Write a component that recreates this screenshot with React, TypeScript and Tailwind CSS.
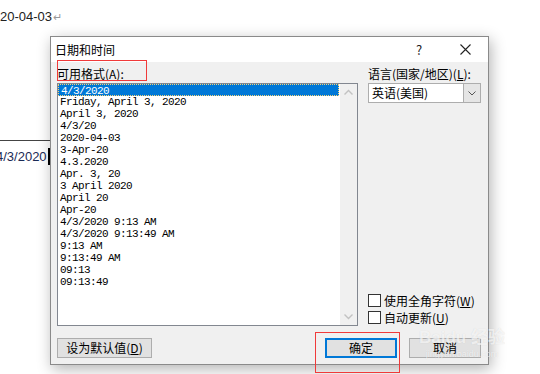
const formats = [
  '4/3/2020',
  'Friday, April 3, 2020',
  'April 3, 2020',
  '4/3/20',
  '2020-04-03',
  '3-Apr-20',
  '4.3.2020',
  'Apr. 3, 20',
  '3 April 2020',
  'April 20',
  'Apr-20',
  '4/3/2020 9:13 AM',
  '4/3/2020 9:13:49 AM',
  '9:13 AM',
  '9:13:49 AM',
  '09:13',
  '09:13:49',
]

const ui = "font-['Microsoft_YaHei','Noto_Sans_CJK_SC',sans-serif]"
const mono = "font-['Liberation_Mono','Noto_Sans_CJK_SC',monospace]"

function Chevron({ up }: { up?: boolean }) {
  return (
    <svg width="9" height="6" viewBox="0 0 9 6">
      <path
        d={up ? 'M0.5 5.5 L4.5 1.5 L8.5 5.5' : 'M0.5 0.5 L4.5 4.5 L8.5 0.5'}
        fill="none"
        stroke="#c2c2c2"
        strokeWidth="1.4"
      />
    </svg>
  )
}

function CheckRow({ label, k }: { label: string; k: string }) {
  return (
    <div className="flex h-[17px] items-center">
      <span className="h-[13px] w-[13px] shrink-0 border border-[#333] bg-white" />
      <span className="ml-[3px] text-[12px] leading-none text-black">
        {label}(<u>{k}</u>)
      </span>
    </div>
  )
}

export default function App() {
  return (
    <div className={`relative h-[374px] w-[540px] overflow-hidden bg-white ${ui}`}>
      {/* document behind the dialog */}
      <div className="flex flex-col">
        <div className="mt-[9px] flex h-[16px] items-center text-[13px] font-['Liberation_Sans',sans-serif] text-[#222]">
          20-04-03<span className="ml-[1px] text-[11px] text-[#999]">↵</span>
        </div>
        <div className="mt-[115px] h-px w-[50px] bg-[#444]" />
        <div className="mt-[7px] flex h-[17px] items-center">
          <span className="-ml-[4px] text-[13px] font-['Liberation_Sans',sans-serif] text-[#1a2a55]">4/3/2020</span>
          <span className="ml-[1px] h-[17px] w-[2px] bg-black" />
        </div>
      </div>

      {/* dialog window */}
      <div className="absolute left-[50px] top-[36px] flex h-[329px] w-[439px] flex-col border border-[#8a8a8a] bg-[#f0f0f0] shadow-[2px_4px_14px_rgba(0,0,0,0.3)]">
        <div className="flex h-[25px] items-center bg-white">
          <span className="pl-[4px] text-[12px] text-black">日期和时间</span>
          <span className="ml-auto flex h-full w-[46px] items-center justify-center text-[13px] text-[#222]">?</span>
          <span className="flex h-full w-[46px] items-center justify-center">
            <svg width="11" height="11" viewBox="0 0 11 11">
              <path d="M0.5 0.5 L10.5 10.5 M10.5 0.5 L0.5 10.5" stroke="#222" strokeWidth="1.1" />
            </svg>
          </span>
        </div>

        <div className="flex flex-1 flex-col px-[6px] pb-[5px] pt-[2px]">
          <div className="flex">
            <div className="flex w-[301px] flex-col">
              <div className="h-[19px] text-[12px] leading-[19px] text-black">
                可用格式(<u>A</u>):
              </div>
              <div className="flex h-[243px] border border-[#828790] bg-white">
                <div className={`flex-1 ${mono}`}>
                  {formats.map((f, i) => (
                    <div
                      key={f}
                      className={`h-[12px] whitespace-pre pl-[2px] text-[11px] leading-[12px] tracking-[-0.6px] ${
                        i === 0
                          ? 'mr-[1px] border border-dotted border-[#f5d37a] bg-[#0078d7] pl-[1px] leading-[10px] text-white'
                          : 'text-black'
                      }`}
                    >
                      {f}
                    </div>
                  ))}
                </div>
                <div className="flex w-[17px] flex-col items-center justify-between bg-[#f0f0f0] py-[5px]">
                  <Chevron up />
                  <Chevron />
                </div>
              </div>
            </div>

            <div className="ml-[10px] flex w-[113px] flex-col">
              <div className="h-[19px] whitespace-nowrap text-[12px] leading-[19px] text-black">
                语言(国家/地区)(<u>L</u>):
              </div>
              <div className="flex h-[20px] border border-[#adadad] bg-white">
                <span className="flex-1 pl-[3px] text-[12px] leading-[18px] text-black">英语(美国)</span>
                <span className="flex w-[17px] items-center justify-center border-l border-[#adadad] bg-[#e5e5e5]">
                  <svg width="8" height="5" viewBox="0 0 8 5">
                    <path d="M0.5 0.5 L4 4 L7.5 0.5" fill="none" stroke="#555" strokeWidth="1" />
                  </svg>
                </span>
              </div>
              <div className="flex-1" />
              <CheckRow label="使用全角字符" k="W" />
              <CheckRow label="自动更新" k="U" />
            </div>
          </div>

          <div className="mt-[12px] flex pr-[1px]">
            <button className="flex h-[20px] w-[95px] items-center justify-center border border-[#adadad] bg-[#e1e1e1] text-[12px] text-black">
              设为默认值(<u>D</u>)
            </button>
            <button className="ml-auto flex h-[20px] w-[72px] items-center justify-center border-2 border-[#0078d7] bg-[#e1e1e1] text-[12px] text-black">
              确定
            </button>
            <button className="ml-[12px] flex h-[20px] w-[72px] items-center justify-center border border-[#adadad] bg-[#e1e1e1] text-[12px] text-black">
              取消
            </button>
          </div>
        </div>
      </div>

      {/* watermark */}
      <div className="pointer-events-none absolute left-[414px] top-[327px] flex w-[96px] flex-col items-center text-white/70 [text-shadow:0_0_1px_rgba(0,0,0,0.12)]">
        <span className="whitespace-nowrap text-[17px] font-bold leading-[22px] font-['Liberation_Sans','Noto_Sans_CJK_SC',sans-serif]">
          Baidu 经验
        </span>
        <span className="whitespace-nowrap text-[9px] leading-[10px] font-['Liberation_Sans',sans-serif]">jingyan.baidu.com</span>
      </div>

      {/* annotation boxes */}
      <div className="pointer-events-none absolute left-[57px] top-[60px] h-[21px] w-[90px] border border-[#f03a3a]" />
      <div className="pointer-events-none absolute left-[315px] top-[332px] h-[41px] w-[85px] border border-[#f03a3a]" />
    </div>
  )
}
